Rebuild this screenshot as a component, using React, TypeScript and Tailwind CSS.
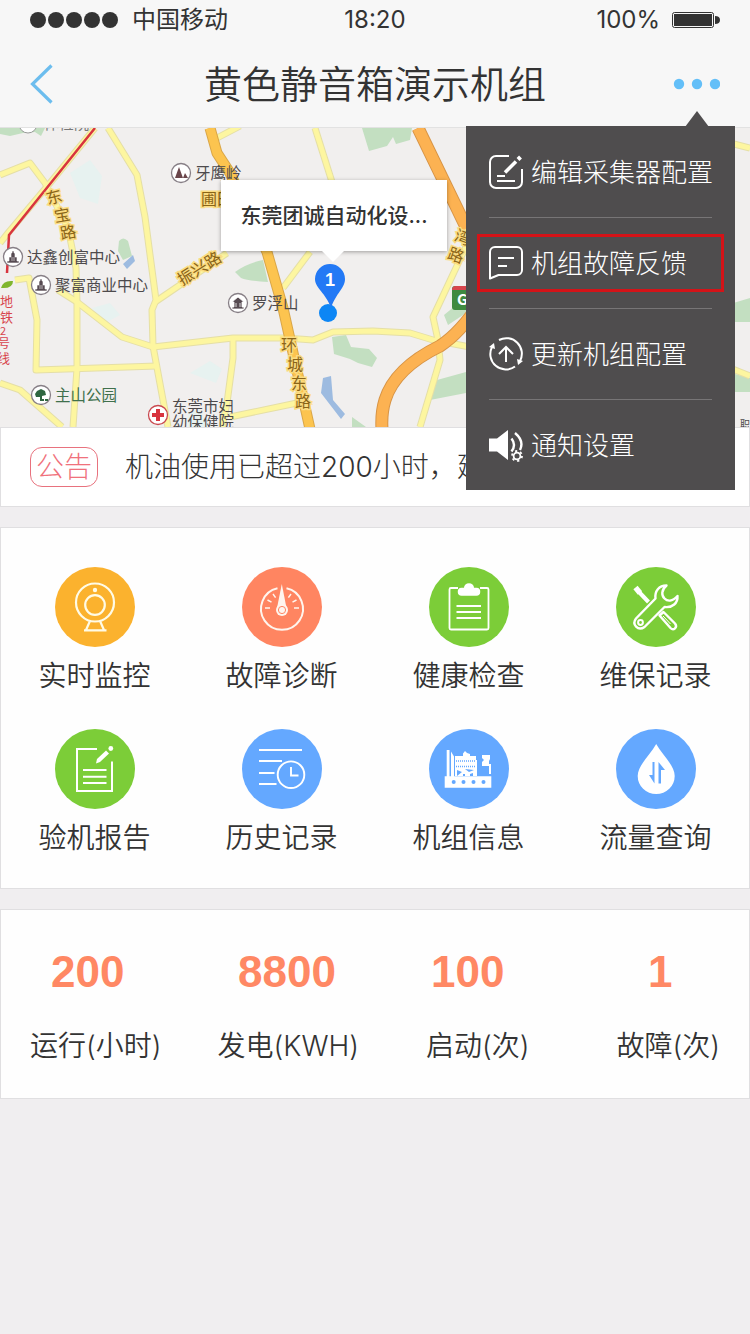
import React from 'react';

type IconProps = { className?: string };

const EditIcon = ({ className }: IconProps) => (
  <svg viewBox="0 0 34 34" fill="none" stroke="currentColor" strokeWidth="2" className={className}>
    <path d="M20 1H7a6 6 0 0 0-6 6v20a6 6 0 0 0 6 6h20a6 6 0 0 0 6-6V14" />
    <path d="M16 17.500 27 6.500" strokeWidth="3.600" />
    <path d="M29 4.500 31.500 2" strokeWidth="4" />
    <path d="M8 21h8M8 26h18" />
  </svg>
);

const FeedbackIcon = ({ className }: IconProps) => (
  <svg viewBox="0 0 34 34" fill="none" stroke="currentColor" strokeWidth="2" className={className}>
    <path d="M1 32.500V6a5 5 0 0 1 5-5h22a5 5 0 0 1 5 5v18a5 5 0 0 1-5 5H9.500z" strokeLinejoin="round" />
    <path d="M9 12h16M9 20h9" />
  </svg>
);

const UpdateIcon = ({ className }: IconProps) => (
  <svg viewBox="0 0 34 34" fill="none" stroke="currentColor" strokeWidth="2" className={className}>
    <path d="M10 3A15.500 15.500 0 0 1 31 24" />
    <path d="M26 29.500A15.500 15.500 0 0 1 3 10" />
    <path d="M0 10 5 6l1 6zM34 24l-5 4-1-6z" fill="currentColor" stroke="none" />
    <path d="M17 25V10M10 17l7-7 7 7" />
  </svg>
);

const SoundIcon = ({ className }: IconProps) => (
  <svg viewBox="0 0 34 34" fill="none" stroke="currentColor" strokeWidth="2" className={className}>
    <path d="M0 10.500h8L19 2v30L8 23.500H0z" fill="currentColor" stroke="none" />
    <path d="M22.500 10.500q5 6.500 0 13" strokeWidth="2.400" />
    <path d="M26 5q9.500 8 5 17" strokeWidth="2.400" />
    <circle cx="28" cy="28" r="3.400" strokeWidth="1.800" />
    <circle cx="28" cy="28" r="5" strokeWidth="1.800" strokeDasharray="2.200 3.036" />
  </svg>
);

const CameraIcon = () => (
  <svg viewBox="0 0 80 80" fill="none" stroke="#fffbe6" strokeWidth="2.200" className="size-20">
    <circle cx="40" cy="35.500" r="19" />
    <circle cx="40" cy="38" r="9.800" />
    <circle cx="40" cy="23" r="2.200" fill="#fffbe6" stroke="none" />
    <path d="M35 54l-4 9M45 54l4 9M29 63.300h22.500" />
  </svg>
);

const GaugeIcon = () => (
  <svg viewBox="0 0 80 80" fill="none" stroke="#fff5ee" strokeWidth="2" className="size-20">
    <path d="M35.500 21.300A21 21 0 1 0 44.500 21.300" />
    <path d="M23 41h5M25.500 33l4 2.200M31 27l2.600 3.600M57 41h-5M54.500 33l-4 2.200M49 27l-2.600 3.600" strokeWidth="1.500" />
    <path d="M39.800 17 44.500 41h-9.500z" fill="#fff5ee" stroke="none" />
    <circle cx="40" cy="43" r="6" fill="#fff5ee" stroke="none" />
    <circle cx="40" cy="43" r="3.600" fill="#fff5ee" stroke="#ff8561" strokeWidth="1" />
  </svg>
);

const ClipboardIcon = () => (
  <svg viewBox="0 0 80 80" fill="none" stroke="#fff" strokeWidth="1.800" className="size-20">
    <path d="M29 21h-7a1.500 1.500 0 0 0-1.500 1.500v38.500a1.500 1.500 0 0 0 1.500 1.500h36a1.500 1.500 0 0 0 1.500-1.500v-38.500a1.500 1.500 0 0 0-1.500-1.500h-7" />
    <path d="M33 28.800a4 4 0 0 1-.5-8h2.500a5 4.500 0 0 1 10 0h2.500a4 4 0 0 1-.5 8z" fill="#fff" stroke="none" />
    <path d="M27.500 39h24.500M27.500 45h24.500M27.500 51h24.500" />
  </svg>
);

const ToolsIcon = () => (
  <svg viewBox="0 0 80 80" fill="none" stroke="#fff" strokeWidth="2.400" strokeLinejoin="round" className="size-20">
    <path d="M20 51.500 39.500 31.500C38.500 24 43 18.500 50.500 18.500 45 23 45.500 28.500 48.500 31.500S56 35 61.500 29C62 36 56.500 41 48.500 40L28.500 60C22 64.500 15.500 57.500 20 51.500z" />
    <circle cx="24.500" cy="55.500" r="2.400" strokeWidth="2" />
    <path d="M19.500 20.500 24 26" strokeWidth="5.500" />
    <path d="M23 25 32.500 35" strokeWidth="4" />
    <path d="m43.500 48.500 4-3.500 11.500 11.500c3 4-1.500 7.500-4.500 4.500z" />
    <path d="m47 49 7.500 8" strokeWidth="1" />
  </svg>
);

const ReportIcon = () => (
  <svg viewBox="0 0 80 80" fill="none" stroke="#fff" strokeWidth="2" className="size-20">
    <path d="M42 20H22v42h35V32.500" />
    <path d="M28 41h23.500M28 47.700h23.500M28 54h23.500" />
    <path d="m41 34.500 1-4.500 9-8.500 3 3-9 8.500z" fill="#fff" stroke="none" />
    <circle cx="55.800" cy="19.500" r="2.400" fill="#fff" stroke="none" />
  </svg>
);

const HistoryIcon = () => (
  <svg viewBox="0 0 80 80" fill="none" stroke="#fff" strokeWidth="1.900" className="size-20">
    <path d="M17 21h43M17 32h23M17 44h15.500M17 55h17.500" />
    <circle cx="49" cy="45.700" r="13.300" />
    <path d="M49 38v8.500h7.500" />
  </svg>
);

const EngineIcon = () => (
  <svg viewBox="0 0 80 80" fill="#fff" className="size-20">
    <path d="M15.700 47.300h46.600v11.400H15.700z" />
    <path d="M17.700 21h2.800v27h-2.800zM22 22.500l3 5V48h-3z" />
    <path d="M26 27h8v-2.500l2-2.500 2 2 3 1v2h6v4h1v16H26z" />
    <path d="M53 26h8v4l-1 2v3h2v10h-2v-8h-7v-4l2-2-2-2z" />
    <path d="M27 32h19.500M27 37.500h19.500" stroke="#64a8ff" strokeWidth="1.500" strokeDasharray="1 1" fill="none" />
    <path d="m28 41 5 2-5 4zM36 40l9 1-5 2zM34 45h2v2h-2zM41 45l3-1v3h-3z" fill="#64a8ff" />
    <g fill="#64a8ff">
      <circle cx="24.700" cy="53" r="2" />
      <circle cx="34.500" cy="53" r="2" />
      <circle cx="44.500" cy="53" r="2" />
      <circle cx="54.500" cy="53" r="2" />
    </g>
  </svg>
);

const FlowIcon = () => (
  <svg viewBox="0 0 80 80" fill="none" className="size-20">
    <path d="M40.200 15C46 26 58.700 36 58.700 47a18.500 18 0 0 1-37 0C21.700 36 34.500 26 40.200 15z" fill="#fff" />
    <path d="M38.500 33v21.500L33 46h3.500V33zM42.500 54.500V33l6.500 8h-4v13.500z" fill="#64a8ff" />
  </svg>
);

const menuItems = [
  { label: '编辑采集器配置', Icon: EditIcon, active: false },
  { label: '机组故障反馈', Icon: FeedbackIcon, active: true },
  { label: '更新机组配置', Icon: UpdateIcon, active: false },
  { label: '通知设置', Icon: SoundIcon, active: false },
];

const features = [
  { label: '实时监控', color: 'bg-[#fbb22e]', Icon: CameraIcon },
  { label: '故障诊断', color: 'bg-[#ff8561]', Icon: GaugeIcon },
  { label: '健康检查', color: 'bg-[#7ccd38]', Icon: ClipboardIcon },
  { label: '维保记录', color: 'bg-[#7ccd38]', Icon: ToolsIcon },
  { label: '验机报告', color: 'bg-[#7ccd38]', Icon: ReportIcon },
  { label: '历史记录', color: 'bg-[#64a8ff]', Icon: HistoryIcon },
  { label: '机组信息', color: 'bg-[#64a8ff]', Icon: EngineIcon },
  { label: '流量查询', color: 'bg-[#64a8ff]', Icon: FlowIcon },
];

const stats = [
  { value: '200', label: '运行(小时)' },
  { value: '8800', label: '发电(KWH)' },
  { value: '100', label: '启动(次)' },
  { value: '1', label: '故障(次)' },
];

const minorRoads = [
  'M108 0 137 47 145 89 156 172 152 182 153 218 168 299',
  'M0 47 30 35 45 55 68 100 76 140 77 175 77 240 73 299',
  'M95 0 50 55 8 105 0 115',
  'M15 152 29 150 37 192 36 242 157 238',
  'M58 162 77 174 122 209 153 219 233 210 285 210 313 212 333 204 373 203 410 205 433 212 470 219',
  'M155 174 227 125',
  'M0 255 20 262 62 299',
  'M233 210 233 230 227 275 222 299',
  'M217 10 240 -2',
  'M315 0 332 54',
  'M310 124 283 160',
  'M230 289 297 275',
  'M470 110 433 189 438 212 440 232 420 299',
  'M730 15 750 20',
  'M730 240 750 248',
];

const poi = [
  { x: 13, y: 129, text: '达鑫创富中心', kind: 'building' },
  { x: 41, y: 157, text: '聚富商业中心', kind: 'building' },
  { x: 181, y: 45, text: '牙鹰岭', kind: 'hill' },
  { x: 238, y: 175, text: '罗浮山', kind: 'temple' },
  { x: 41, y: 267, text: '主山公园', kind: 'park' },
];

const poiShapes: Record<string, React.ReactNode> = {
  building: <path d="M-6 6h12v-2H4V0H2v-4H1v-2h-2v2h-1v4h-2v4h-2zM-2 1h4M-2 3h4" fill="#574b52" stroke="#fff" strokeWidth=".6" />,
  hill: <path d="M-6 5-2-6 2 5zM2 5l2-5 3 5z" fill="#6a464b" />,
  temple: <path d="M-6-1 0-6l6 5H4v5h2v2H-6V4h2v-5zM-2 0v4M2 0v4" fill="#574b52" stroke="#fff" strokeWidth=".8" />,
  park: <path d="M-1 6V2h-4l-1-3 2-3 4-2 4 2 1 4-4 1v3h2v2zM4 4h3v2H4z" fill="#2f6640" />,
};

function MapView() {
  return (
    <svg viewBox="0 0 750 299" preserveAspectRatio="xMinYMin slice" className="block h-full w-full" fontFamily='"Noto Sans CJK SC", sans-serif'>
      <rect width="750" height="299" fill="#f1efee" />
      <g fill="#e7f2f0">
        <path d="M70 45 90 32 102 48 98 76 80 70z" />
        <path d="M92 180l18-5 10 12-15 8zM190 245l20-12 12 8-6 14zM188 285l12-4 8 18h-20z" />
      </g>
      <g fill="#c3dfc1">
        <path d="M0 0h45l-4 8-6-4-12 1-13 3-10-2z" />
        <path d="M362 0h50l-2 12-14 4-3-7-6 9-18 5z" />
        <path d="M235 144q12-9 28-12l5 22q-20-1-27-4z" />
        <path d="M332 209l14-2 5 12 18 2 8 9-5 9-14-4-8-4-16-5z" />
        <path d="M437 252l29-8v21l-36 7zM444 187l22-18v16l-18 12zM352 289l14 10h-14z" />
        <path d="M119 113q4-5 9 0l4 15-9 4-5-9z" />
        <path d="M730 176l20-6v24h-16zM735 246l15 4v14h-15z" />
      </g>
      <path d="m123 136 10-9 2 6-8 8zM323 250l8-2 2 24 12 14-4 5-20-26z" fill="#9dbbe0" />
      <g fill="none" stroke="#e5dfa6" strokeWidth="7" strokeLinejoin="round">
        {minorRoads.map((d) => <path key={d} d={d} />)}
      </g>
      <g fill="none" stroke="#fdf6a0" strokeWidth="5" strokeLinejoin="round">
        {minorRoads.map((d) => <path key={d} d={d} />)}
      </g>
      <g fill="none" strokeLinejoin="round">
        <path d="M210 0 217 25 230 45 267 124 283 180 310 301" stroke="#d9a648" strokeWidth="11" />
        <path d="M210 0 217 25 230 45 267 124 283 180 310 301" stroke="#fcc44f" strokeWidth="9" />
        <path d="M418 0 466 99 480 130M480 175Q460 205 440 218 395 240 385 272 381 285 382 301" stroke="#d79446" strokeWidth="13" />
        <path d="M418 0 466 99 480 130M480 175Q460 205 440 218 395 240 385 272 381 285 382 301" stroke="#fcb252" strokeWidth="11" />
        <path d="M95 0 9 107 7 145" stroke="#d8343f" strokeWidth="2.500" />
      </g>
      <path d="M1 160q2-8 12-7 0 8-12 7z" fill="#7fb52e" />

      {poi.map(({ x, y, text, kind }) => (
        <g key={text}>
          <g transform={`translate(${x} ${y})`}>
            <circle r="9.500" fill="#fff" stroke="#877f86" strokeWidth="1.300" />
            {poiShapes[kind]}
          </g>
          <text x={x + 14} y={y + 6} fontSize="15.500" fill={kind === 'park' ? '#40704c' : '#4d4a4c'}>{text}</text>
        </g>
      ))}
      <circle cx="28" cy="-4" r="9" fill="#fff" stroke="#999" />
      <text x="44" y="1" fontSize="15" fill="#777">体检院</text>
      <circle cx="158" cy="287" r="9.500" fill="#fff" stroke="#c9494f" strokeWidth="1.300" />
      <path d="M158 281v12M152 287h12" stroke="#d8343f" strokeWidth="4" />
      <g fontSize="15.500" fill="#4d4a4c">
        <text x="172" y="284">东莞市妇</text>
        <text x="172" y="300">幼保健院</text>
        <text x="740" y="300" fontSize="10">职</text>
      </g>

      <g fontSize="16" fill="#8a6417" stroke="#fbdc82" strokeWidth="3" paintOrder="stroke">
        <text x="46" y="75" transform="rotate(-15 54 69)">东</text>
        <text x="54" y="93" transform="rotate(-10 62 87)">宝</text>
        <text x="60" y="110" transform="rotate(-10 69 103)">路</text>
        <text x="182" y="158" transform="rotate(-32 182 158)">振兴路</text>
        <text x="281" y="223">环</text>
        <text x="287" y="242">城</text>
        <text x="291" y="261">东</text>
        <text x="295" y="279">路</text>
        <text x="454" y="115" transform="rotate(20 462 112)">湾</text>
        <text x="448" y="133" transform="rotate(20 456 127)">路</text>
        <text x="201" y="77">圃田</text>
      </g>
      <g fontSize="13" fill="#d8454d">
        <text x="0" y="178">地</text>
        <text x="0" y="194">铁</text>
        <text x="0" y="207" fontSize="11">2</text>
        <text x="-2" y="220" fontSize="12">号</text>
        <text x="-3" y="235">线</text>
      </g>
      <rect x="452" y="158" width="40" height="24" rx="3" fill="#3f8a40" />
      <path d="M452 162q0-4 4-4h36v4z" fill="#d8454d" />
      <text x="457" y="177" fontSize="15" fontWeight="700" fill="#fff">G</text>

      <circle cx="328" cy="185" r="9" fill="#0d86f5" />
      <path d="M330 136a15 15 0 0 1 15 15c0 9-9 14-14 29-5-15-16-20-16-29a15 15 0 0 1 15-15z" fill="#2379f5" />
      <text x="330" y="158" fontSize="18" fontWeight="700" fill="#fff" textAnchor="middle" fontFamily='"Liberation Sans", sans-serif'>1</text>
    </svg>
  );
}

export default function App() {
  return (
    <div className="min-h-screen bg-[#f0eef0] font-['Inter','Noto_Sans_CJK_SC',sans-serif] text-[#333]">
      <header className="relative border-b border-[#e2e2e2] bg-[#f7f7f7]">
        <div className="grid h-10 grid-cols-3 items-center px-[30px] text-2xl">
          <div className="flex items-center gap-3">
            <svg viewBox="0 0 90 16" fill="currentColor" className="h-4 w-[90px]">
              {[8, 26, 44, 62, 80].map((cx) => <circle key={cx} cx={cx} cy="8" r="8" />)}
            </svg>
            <span>中国移动</span>
          </div>
          <span className="text-center">18:20</span>
          <div className="flex items-center justify-end gap-3">
            <span>100%</span>
            <svg viewBox="0 0 48 16" className="h-4 w-12">
              <rect x=".5" y=".5" width="41" height="15" rx="2" fill="none" stroke="#333" />
              <rect x="2" y="2" width="38" height="12" fill="#333" />
              <path d="M43 4q5 0 5 4t-5 4z" fill="#333" />
            </svg>
          </div>
        </div>

        <div className="flex h-[87px] items-center justify-between px-[30px]">
          <button aria-label="返回" className="flex w-12">
            <svg viewBox="0 0 24 40" fill="none" stroke="#6cbdee" strokeWidth="3.200" className="h-10 w-6">
              <path d="M21.500 1.500 2.500 20l19 18.500" />
            </svg>
          </button>
          <h1 className="text-[38px] leading-none font-[350]">黄色静音箱演示机组</h1>
          <button aria-label="更多" className="flex w-12 justify-end">
            <svg viewBox="0 0 48 12" fill="#63bff8" className="h-3 w-12">
              <circle cx="7" cy="6" r="5.200" />
              <circle cx="25" cy="6" r="5.200" />
              <circle cx="43" cy="6" r="5.200" />
            </svg>
          </button>
        </div>

        {/* dropdown opened from the dots */}
        <div className="absolute top-[126px] right-[15px] z-10 w-[269px] bg-[#4f4d4e] px-[11px] pt-px text-white">
          <svg viewBox="0 0 24 16" fill="#4f4d4e" className="absolute -top-[15px] right-[26px] h-4 w-6">
            <path d="M12 0 24 16H0z" />
          </svg>
          {menuItems.map(({ label, Icon, active }, index) => (
            <div key={label}>
              {index > 0 && <div className="mx-3 h-px bg-[#777576]" />}
              <div className="flex h-[90px] items-center">
                <button
                  className={`flex h-[58px] w-full items-center gap-2 border-3 px-[9px] text-[26px] font-light whitespace-nowrap ${
                    active ? 'border-[#d41318]' : 'border-transparent'
                  }`}
                >
                  <Icon className="size-[34px] shrink-0" />
                  <span>{label}</span>
                </button>
              </div>
            </div>
          ))}
        </div>
      </header>

      <main>
        <section className="relative h-[299px] overflow-hidden">
          <MapView />
          <div className="absolute top-[52px] left-[221px] flex h-[71px] w-[226px] items-center justify-center bg-white text-[21px] font-medium shadow-[0_1px_4px_rgba(0,0,0,0.35)]">
            东莞团诚自动化设...
            <svg viewBox="0 0 22 11" fill="#fff" className="absolute top-full left-[101px] h-[11px] w-[22px]">
              <path d="M0 0h22L11 11z" />
            </svg>
          </div>
        </section>

        <section className="flex h-20 items-center gap-[27px] border border-[#e0dfe1] bg-white px-[29px] text-[28px] font-light">
          <span className="flex h-10 w-[68px] shrink-0 items-center justify-center rounded-xl border border-[#e8727e] text-[#f0717c]">公告</span>
          <p className="truncate">机油使用已超过200小时，建议</p>
        </section>

        <section className="mt-5 grid grid-cols-4 gap-y-8 border border-[#e0dfe1] bg-[#fefefe] pt-[39px] pb-[29px]">
          {features.map(({ label, color, Icon }) => (
            <button key={label} className="flex flex-col items-center gap-2">
              <span className={`size-20 rounded-full ${color}`}>
                <Icon />
              </span>
              <span className="text-[28px] leading-[42px] font-[350]">{label}</span>
            </button>
          ))}
        </section>

        <section className="mt-5 border border-[#e0dfe1] bg-[#fefefe] py-[30px]">
          <div className="grid grid-cols-[187fr_193fr_217fr_51fr] px-[50px] font-['Liberation_Sans',sans-serif] text-[44px] leading-[64px] font-bold text-[#ff8864]">
            {stats.map(({ value, label }) => (
              <span key={label}>{value}</span>
            ))}
          </div>
          <div className="mt-5 grid grid-cols-[188fr_209fr_191fr_102fr] px-[29px] text-[28px] leading-[44px] font-[350] whitespace-nowrap">
            {stats.map(({ label }) => (
              <span key={label}>{label}</span>
            ))}
          </div>
        </section>
      </main>
    </div>
  );
}
